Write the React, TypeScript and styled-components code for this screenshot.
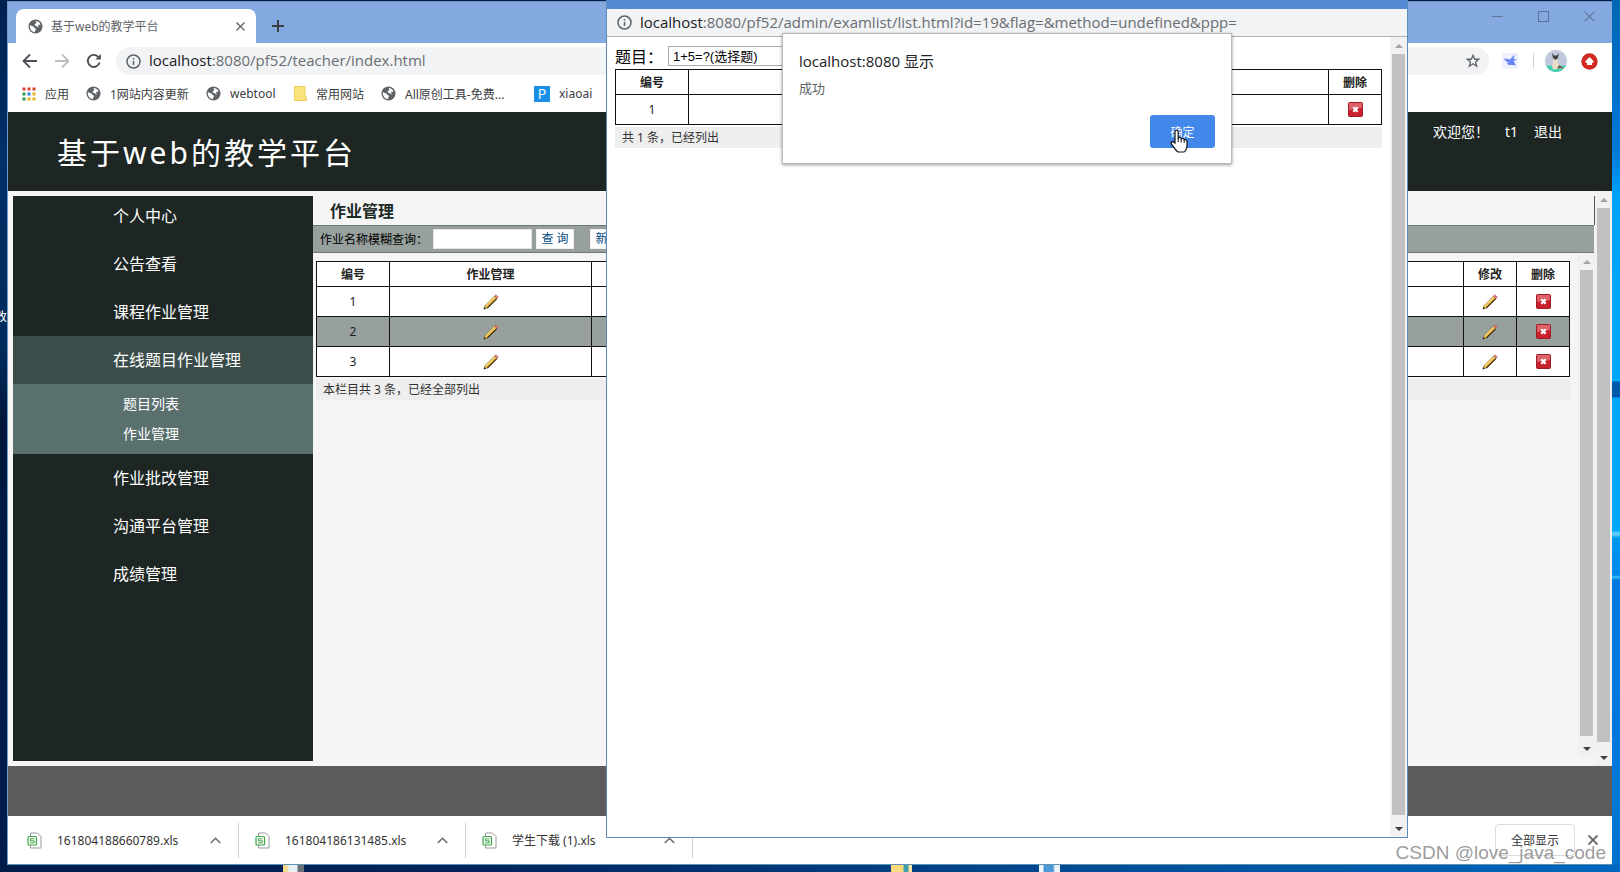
import React from "react";
import styled, { createGlobalStyle, css } from "styled-components";

const UI = `"Open Sans", "Noto Sans CJK SC", sans-serif`;
const CN = `"Noto Sans", "Noto Sans CJK SC", sans-serif`;

const GlobalStyle = createGlobalStyle`
  * { box-sizing: border-box; }
  body { margin: 0; font-family: ${CN}; font-size: 12px; color: #222; }
  button, input, select { font-family: inherit; }
  ul { list-style: none; margin: 0; padding: 0; }
  h1, h2, p { margin: 0; font-weight: 400; }
`;

const Desktop = styled.div`
  position: relative;
  display: flex;
  flex-direction: column;
  min-height: 100vh;
  padding: 1px 8px 0 7px;
  background:
    linear-gradient(90deg, #021d4a 0, #03245c 30%, #0354a0 75%, #0067bd 100%) bottom / 100% 7px no-repeat,
    linear-gradient(180deg, #0167b5 0, #0078d8 150px, #00a2f8 195px, #00a8fc 300px, #00a8fc 381px, #0058a8 382px, #0058a8 397px, #00a8fc 398px, #00a8fc 530px, #70d4ff 534px, #0098f0 538px, #0088e8 575px, #36c4f8 577px, #0078e0 580px, #0078d8 800px, #0070c8 100%) right / 8px 100% no-repeat,
    linear-gradient(180deg, #00204f 0, #003068 150px, #002a5c 350px, #001538 430px, #001a44 520px, #001c4a 100%);
`;
const DesktopLabel = styled.span`
  position: absolute;
  left: -5px;
  top: 308px;
  width: 12px;
  overflow: hidden;
  font-size: 12px;
  line-height: 18px;
  color: #fff;
`;
const TaskStrip = styled.div`
  display: flex;
  height: 7px;
  padding-left: 276px;
  overflow: hidden;
`;
const TaskIcon = styled.i<{ $bg: string; $gap?: number }>`
  width: 21px;
  margin-right: ${(p) => p.$gap ?? 0}px;
  background: ${(p) => p.$bg};
`;

const Browser = styled.div`
  flex: 1;
  display: flex;
  flex-direction: column;
  border-left: 1px solid #6d9ccb;
  border-bottom: 1px solid #5c93b5;
  background: #fff;
`;
const TabStrip = styled.div`
  display: flex;
  align-items: flex-end;
  height: 42px;
  padding-left: 8px;
  background: #84a9e0;
  border-top: 1px solid #6d8fc0;
`;
const Tab = styled.div`
  display: flex;
  align-items: center;
  gap: 8px;
  width: 240px;
  height: 34px;
  padding: 0 8px 0 12px;
  border-radius: 8px 8px 0 0;
  background: #fff;
  font-size: 12px;
  color: #5f6368;
  span { flex: 1; }
`;
const IconButton = styled.button<{ $w?: number }>`
  display: flex;
  align-items: center;
  justify-content: center;
  width: ${(p) => p.$w ?? 16}px;
  height: 28px;
  padding: 0;
  border: 0;
  background: none;
`;
const NewTab = styled(IconButton)`
  margin: 0 0 3px 14px;
`;
const WindowControls = styled.div`
  display: flex;
  align-self: flex-start;
  margin-left: auto;
`;
const Toolbar = styled.div`
  display: flex;
  align-items: center;
  height: 36px;
  padding: 0 12px 0 14px;
`;
const NavGroup = styled.div`
  display: flex;
  gap: 16px;
`;
const Omnibox = styled.div`
  flex: 1;
  display: flex;
  align-items: center;
  gap: 8px;
  height: 28px;
  margin-left: 14px;
  padding: 0 8px 0 10px;
  border-radius: 14px;
  background: #f1f3f4;
`;
const Address = styled.span`
  flex: 1;
  padding-bottom: 2px;
  font-family: ${UI};
  font-size: 15px;
  line-height: 20px;
  color: #6a6e73;
  b { font-weight: 400; color: #202124; }
`;
const Extensions = styled.div`
  display: flex;
  align-items: center;
  gap: 11px;
  margin-left: 13px;
`;
const Divider = styled.i`
  width: 1px;
  height: 16px;
  margin: 0 0 0 4px;
  background: #d0d0d0;
`;
const Bookmarks = styled.nav`
  display: flex;
  align-items: center;
  height: 33px;
  padding: 0 0 4px 14px;
`;
const Bookmark = styled.a<{ $w: number }>`
  display: flex;
  align-items: center;
  gap: 9px;
  width: ${(p) => p.$w}px;
  font-size: 12px;
  white-space: nowrap;
  color: #3c4043;
  text-decoration: none;
`;

const Header = styled.header`
  display: flex;
  justify-content: space-between;
  height: 79px;
  padding: 0 50px 0 49px;
  background: #1d2623;
  color: #fff;
`;
const SiteTitle = styled.h1`
  align-self: center;
  padding-top: 2px;
  font-size: 30px;
  line-height: 40px;
  letter-spacing: 3px;
`;
const UserBar = styled.div`
  display: flex;
  gap: 16px;
  padding-top: 10px;
  font-size: 14px;
  line-height: 20px;
  a { color: #fff; text-decoration: none; }
`;
const Body = styled.div`
  flex: 1;
  display: flex;
  padding-left: 5px;
  background: #f5f5f5;
`;
const Sidebar = styled.nav`
  width: 300px;
  margin: 5px 0;
  background: #1d2623;
`;
const MenuLink = styled.a<{ $active?: boolean }>`
  display: block;
  height: 40px;
  margin-bottom: 8px;
  padding-left: 100px;
  font-size: 16px;
  line-height: 40px;
  color: #fff;
  text-decoration: none;
  ${(p) =>
    p.$active &&
    css`
      height: 48px;
      margin: -4px 0 0;
      line-height: 48px;
      background: #3b4d4a;
    `}
`;
const SubMenu = styled.ul`
  margin-bottom: 4px;
  padding: 5px 0 5px 110px;
  background: #5a706e;
  a {
    display: block;
    font-size: 14px;
    line-height: 30px;
    color: #fff;
    text-decoration: none;
  }
`;
const Main = styled.main`
  flex: 1;
  display: flex;
  flex-direction: column;
  margin: 5px 0 9px;
`;
const PageTitle = styled.h2`
  height: 29px;
  padding-left: 17px;
  border-right: 1px solid #4f5c59;
  font-size: 16px;
  font-weight: 700;
  line-height: 30px;
  color: #1c2a26;
`;
const SearchBar = styled.form`
  display: flex;
  align-items: center;
  height: 28px;
  margin-right: 1px;
  padding-left: 7px;
  border-top: 1px solid #6c7876;
  border-bottom: 1px solid #6c7876;
  background: #98a09e;
  color: #000;
  label { width: 113px; }
`;
const SearchInput = styled.input`
  width: 99px;
  height: 20px;
  border: 1px solid #e4e4e4;
  background: #fff;
`;
const FormButton = styled.button<{ $gap: number }>`
  width: 38px;
  height: 20px;
  margin-left: ${(p) => p.$gap}px;
  padding: 0;
  border: 1px solid #eee;
  background: #fff;
  font-size: 12px;
  line-height: 16px;
  color: #064a80;
`;
const Pane = styled.div`
  flex: 1;
  display: flex;
`;
const ListArea = styled.div`
  flex: 1;
  padding: 8px 8px 0 3px;
`;
const DataTable = styled.table`
  width: 100%;
  border-collapse: collapse;
  table-layout: fixed;
  background: #fff;
  text-align: center;
  th, td { padding: 0; border: 1px solid #111; }
  th { height: 25px; font-weight: 700; }
  td { height: 30px; }
  svg { display: block; }
`;
const Row = styled.tr<{ $shade?: boolean }>`
  background: ${(p) => (p.$shade ? "#98a09e" : "#fff")};
`;
const CellButton = styled.button`
  display: block;
  margin: 0 auto;
  padding: 0;
  border: 0;
  background: none;
`;
const ListNote = styled.p`
  margin-top: 2px;
  padding: 0 7px;
  background: #eee;
  line-height: 21px;
  color: #333;
`;
const Track = styled.div`
  display: flex;
  flex-direction: column;
  align-items: center;
  width: 17px;
  background: #f1f1f1;
`;
const Arrow = styled.i<{ $down?: boolean }>`
  height: 17px;
  display: flex;
  align-items: center;
  &::before {
    content: "";
    border: 4px solid transparent;
    border-top-width: ${(p) => (p.$down ? 4 : 0)}px;
    border-bottom-width: ${(p) => (p.$down ? 0 : 4)}px;
    border-top-color: ${(p) => (p.$down ? "#404040" : "transparent")};
    border-bottom-color: ${(p) => (p.$down ? "transparent" : "#a3a3a3")};
  }
`;
const Thumb = styled.i<{ $end?: number }>`
  flex: 1;
  width: 13px;
  margin-bottom: ${(p) => p.$end ?? 0}px;
  background: #c1c1c1;
`;
const Footer = styled.footer`
  height: 50px;
  background: #5c5c5c;
`;
const Downloads = styled.div`
  display: flex;
  align-items: center;
  height: 48px;
  padding: 0 11px 0 19px;
`;
const Download = styled.div`
  display: flex;
  align-items: center;
  gap: 15px;
  width: 227px;
  height: 35px;
  padding-right: 14px;
  border-right: 1px solid #cfcfcf;
  & + & { padding-left: 16px; }
  span { flex: 1; color: #333; }
`;
const DownloadFirst = styled(Download)`
  width: 212px;
`;
const ShowAll = styled.button`
  width: 80px;
  height: 32px;
  margin: 0 10px 0 auto;
  border: 1px solid #dadce0;
  border-radius: 4px;
  background: #fff;
  font-size: 12px;
  color: #333;
`;
const Watermark = styled.span`
  position: absolute;
  right: 14px;
  bottom: 7px;
  font-family: "Liberation Sans", sans-serif;
  font-size: 19px;
  line-height: 24px;
  color: rgba(90, 90, 90, 0.62);
`;

const Popup = styled.section`
  position: absolute;
  left: 606px;
  right: 212px;
  top: 0;
  bottom: 34px;
  display: flex;
  flex-direction: column;
  border: 1px solid #5d8cba;
  border-top: 0;
  background: #fff;
`;
const PopupTitle = styled.div`
  height: 9px;
  background: #558ad4;
`;
const PopupAddress = styled.div`
  display: flex;
  align-items: center;
  gap: 8px;
  height: 28px;
  padding-left: 10px;
  background: #f1f3f4;
  border-bottom: 1px solid #b0b2b4;
`;
const PopupBody = styled.div`
  flex: 1;
  display: flex;
`;
const PopupContent = styled.div`
  flex: 1;
  padding: 9px 8px;
`;
const Field = styled.div`
  display: flex;
  height: 23px;
  label {
    width: 53px;
    font-size: 16px;
    line-height: 22px;
    color: #000;
  }
`;
const Select = styled.select`
  width: 180px;
  height: 20px;
  padding: 0 4px;
  border: 1px solid #a9a9a9;
  border-radius: 0;
  appearance: none;
  background: #fff;
  font-family: "Liberation Sans", "Noto Sans CJK SC", sans-serif;
  font-size: 13px;
  color: #000;
`;
const Dialog = styled.div`
  position: absolute;
  left: 175px;
  top: 33px;
  width: 450px;
  height: 131px;
  padding: 16px 16px 15px;
  border: 1px solid #bbb;
  background: #fff;
  box-shadow: 0 1px 3px rgba(0, 0, 0, 0.4);
  display: flex;
  flex-direction: column;
  h2 {
    font-family: ${UI};
    font-size: 15px;
    line-height: 22px;
    color: #202124;
  }
  p {
    padding-top: 6px;
    font-size: 13px;
    line-height: 20px;
    color: #5f6368;
  }
`;
const Confirm = styled.button`
  align-self: flex-end;
  width: 65px;
  height: 33px;
  margin-top: auto;
  border: 0;
  border-radius: 3px;
  background: #4287ea;
  font-size: 12px;
  color: #fff;
`;
const Pointer = styled.svg`
  position: absolute;
  left: 387px;
  top: 95px;
`;

const Globe = () => (
  <svg width="15" height="15" viewBox="0 0 16 16">
    <circle cx="8" cy="8" r="7.5" fill="#5f6368" />
    <path d="M2 6.5 C4 8 6 7.5 6.5 9 C7 10 8.5 9.5 8.5 11 L7 14 C4 13.5 2 11 2 8Z M8 2.2 C10 2 12.5 3.5 13.5 6 L11 6.2 C10 7.5 12 8 11 9.2 L9.5 7.8 C8 7 6.8 7 7.2 5.5 C8 4.8 9 5 8.8 3.8Z" fill="#fff" />
  </svg>
);
const Info = () => (
  <svg width="15" height="15" viewBox="0 0 15 15" fill="none" stroke="#5f6368" strokeWidth="1.5">
    <circle cx="7.5" cy="7.5" r="6.5" />
    <path d="M7.5 6.8V11M7.5 4V5.5" />
  </svg>
);
const Cross = ({ size = 9, color = "#5f6368", w = 1.4 }: { size?: number; color?: string; w?: number }) => (
  <svg width={size} height={size} viewBox="0 0 10 10" stroke={color} strokeWidth={w}>
    <path d="M.5 .5L9.5 9.5M9.5 .5L.5 9.5" />
  </svg>
);
const Back = ({ color = "#4d5156", flip = false }: { color?: string; flip?: boolean }) => (
  <svg width="16" height="16" viewBox="0 0 16 16" fill="none" stroke={color} strokeWidth="1.8">
    <path d={flip ? "M1 8H14M8 1.5L14.5 8L8 14.5" : "M15 8H2M8 1.5L1.5 8L8 14.5"} />
  </svg>
);
const Reload = () => (
  <svg width="16" height="16" viewBox="0 0 16 16" fill="none" stroke="#4d5156" strokeWidth="1.9">
    <path d="M13.6 9.5A6 6 0 1 1 12.2 3.8L14 5.6" />
    <path d="M14.9 1V6.6H9.3Z" fill="#4d5156" stroke="none" />
  </svg>
);
const Star = () => (
  <svg width="14" height="14" viewBox="0 0 16 16" fill="none" stroke="#5f6368" strokeWidth="1.5">
    <path d="M8 1.5L9.9 6H14.6L10.9 9.1L12.2 14L8 11.2L3.8 14L5.1 9.1L1.4 6H6.1Z" />
  </svg>
);
const Bird = () => (
  <svg width="16" height="16" viewBox="0 0 16 16">
    <rect width="16" height="16" fill="#eef0ff" />
    <path d="M2 5.500L8 6.500L12.500 1.500L11.500 6L15 6.200L11.500 8L14 12.500L9.500 11.800C7 12.500 5.500 11.500 5 10L7 9.500C4.500 9 3 7.500 2 5.500Z" fill="#6183f4" />
  </svg>
);
const Avatar = () => (
  <svg width="22" height="22" viewBox="0 0 22 22">
    <circle cx="11" cy="11" r="11" fill="#c3c9dc" />
    <path d="M1 15.500H21A11 11 0 0 1 1 15.500Z" fill="#43d0b0" />
    <path d="M9 8H12L13 14L19 18L8 19.500L7 16Z" fill="#e9dfc4" />
    <path d="M7 3L9 5.500H12L14 3L13 8L10.500 10L8 8Z" fill="#3d4440" />
    <path d="M14 15L19 18L12 18.500Z" fill="#6a5b4d" />
  </svg>
);
const UpdateBadge = () => (
  <svg width="17" height="17" viewBox="0 0 17 17">
    <circle cx="8.500" cy="8.500" r="8.200" fill="#d02b23" />
    <path d="M8.500 4L13 8.500L11.500 10H11V12H6V10H5.500L4 8.500Z" fill="#fff" />
  </svg>
);
const AppsGrid = () => (
  <svg width="14" height="14" viewBox="0 0 14 14">
    {["#d8402f", "#d8402f", "#d8402f", "#2d9a4c", "#3b7de0", "#e9b11e", "#2d9a4c", "#e9b11e", "#e9b11e"].map((c, i) => (
      <rect key={i} x={(i % 3) * 5 + 0.5} y={Math.floor(i / 3) * 5 + 0.5} width="3" height="3" fill={c} />
    ))}
  </svg>
);
const Folder = () => (
  <svg width="13" height="15" viewBox="0 0 13 15">
    <path d="M.5 .5H11V11H12.500V14.500H.5Z" fill="#fae27c" stroke="#efcf5c" />
  </svg>
);
const PBadge = styled.i`
  width: 16px;
  height: 16px;
  background: #1a8fe8;
  color: #fff;
  font: 14px/16px ${UI};
  text-align: center;
`;
const Pencil = () => (
  <svg width="16" height="16" viewBox="0 0 16 16">
    <path d="M1 15L2.200 11.500L11.500 2L14 4.500L4.500 13.800Z" fill="#f0c04a" stroke="#6f5420" strokeWidth=".6" />
    <path d="M4.300 14L13.800 4.600" stroke="#3a2a10" strokeWidth="1.100" />
    <path d="M3 11.500L11.800 2.800" stroke="#fbe69a" strokeWidth=".9" />
    <path d="M11.500 2L13 .7L15.300 3L14 4.500Z" fill="#df7c74" stroke="#a8605a" strokeWidth=".6" />
    <path d="M.6 15.400L1.400 13L3 14.600Z" fill="#222" />
  </svg>
);
const Remove = () => (
  <svg width="15" height="15" viewBox="0 0 15 15">
    <rect x=".5" y=".5" width="14" height="14" rx="1" fill="#c8202c" stroke="#9c1b24" />
    <path d="M1 1H14V6L1 8Z" fill="#df6269" />
    <path d="M5.300 5.300L9.700 9.700M9.700 5.300L5.300 9.700" stroke="#fff" strokeWidth="2.200" />
  </svg>
);
const SheetIcon = () => (
  <svg width="15" height="17" viewBox="0 0 15 17" fill="none">
    <path d="M3.500 4V1H10.500L14 4.500V16H3.500V13" stroke="#9a9a9a" />
    <rect x="1" y="4.500" width="8.500" height="8.500" rx="1" stroke="#3fa648" strokeWidth="1.200" fill="#fff" />
    <path d="M7.500 6.800H3.300V8.800H7.200V10.900H3" stroke="#3fa648" />
  </svg>
);
const Chevron = () => (
  <svg width="11" height="7" viewBox="0 0 11 7" fill="none" stroke="#6a6a6a" strokeWidth="1.500">
    <path d="M.8 6L5.500 1.300L10.200 6" />
  </svg>
);

const Scrollbar = ({ end }: { end?: number }) => (
  <Track>
    <Arrow />
    <Thumb $end={end} />
    <Arrow $down />
  </Track>
);

const topMenu = ["个人中心", "公告查看", "课程作业管理"];
const bottomMenu = ["作业批改管理", "沟通平台管理", "成绩管理"];

export default function App() {
  return (
    <>
      <GlobalStyle />
      <Desktop>
        <DesktopLabel>改</DesktopLabel>
        <Browser>
          <TabStrip>
            <Tab>
              <Globe />
              <span>基于web的教学平台</span>
              <IconButton aria-label="关闭标签页"><Cross /></IconButton>
            </Tab>
            <NewTab aria-label="新标签页">
              <svg width="12" height="12" viewBox="0 0 12 12" stroke="#3c4043" strokeWidth="2"><path d="M6 0V12M0 6H12" /></svg>
            </NewTab>
            <WindowControls>
              <IconButton $w={46} aria-label="最小化">
                <svg width="11" height="11" stroke="#5d7398"><path d="M0 5.500H11" /></svg>
              </IconButton>
              <IconButton $w={46} aria-label="最大化">
                <svg width="11" height="11" fill="none" stroke="#5d7398"><rect x=".5" y=".5" width="10" height="10" /></svg>
              </IconButton>
              <IconButton $w={46} aria-label="关闭"><Cross size={11} color="#5d7398" w={1} /></IconButton>
            </WindowControls>
          </TabStrip>
          <Toolbar>
            <NavGroup>
              <IconButton aria-label="后退"><Back /></IconButton>
              <IconButton aria-label="前进"><Back flip color="#bcbec0" /></IconButton>
              <IconButton aria-label="重新加载"><Reload /></IconButton>
            </NavGroup>
            <Omnibox>
              <Info />
              <Address><b>localhost</b>:8080/pf52/teacher/index.html</Address>
              <IconButton aria-label="收藏"><Star /></IconButton>
            </Omnibox>
            <Extensions>
              <Bird />
              <Divider />
              <Avatar />
              <IconButton $w={22} aria-label="更新"><UpdateBadge /></IconButton>
            </Extensions>
          </Toolbar>
          <Bookmarks>
            <Bookmark href="#" $w={64}><AppsGrid />应用</Bookmark>
            <Bookmark href="#" $w={120}><Globe />1网站内容更新</Bookmark>
            <Bookmark href="#" $w={88}><Globe />webtool</Bookmark>
            <Bookmark href="#" $w={87}><Folder />常用网站</Bookmark>
            <Bookmark href="#" $w={153}><Globe />All原创工具-免费...</Bookmark>
            <Bookmark href="#" $w={60}><PBadge>P</PBadge>xiaoai</Bookmark>
          </Bookmarks>
          <Header>
            <SiteTitle>基于web的教学平台</SiteTitle>
            <UserBar>
              <span>欢迎您！</span>
              <span>t1</span>
              <a href="#">退出</a>
            </UserBar>
          </Header>
          <Body>
            <Sidebar>
              {topMenu.map((t) => <MenuLink href="#" key={t}>{t}</MenuLink>)}
              <MenuLink href="#" $active>在线题目作业管理</MenuLink>
              <SubMenu>
                <li><a href="#">题目列表</a></li>
                <li><a href="#">作业管理</a></li>
              </SubMenu>
              {bottomMenu.map((t) => <MenuLink href="#" key={t}>{t}</MenuLink>)}
            </Sidebar>
            <Main>
              <PageTitle>作业管理</PageTitle>
              <SearchBar>
                <label htmlFor="keyword">作业名称模糊查询：</label>
                <SearchInput id="keyword" />
                <FormButton type="button" $gap={4}>查 询</FormButton>
                <FormButton type="button" $gap={16}>新 增</FormButton>
              </SearchBar>
              <Pane>
                <ListArea>
                  <DataTable>
                    <colgroup>
                      <col style={{ width: 73 }} />
                      <col style={{ width: 202 }} />
                      <col />
                      <col style={{ width: 53 }} />
                      <col style={{ width: 53 }} />
                    </colgroup>
                    <thead>
                      <tr><th>编号</th><th>作业管理</th><th /><th>修改</th><th>删除</th></tr>
                    </thead>
                    <tbody>
                      {[1, 2, 3].map((n) => (
                        <Row key={n} $shade={n === 2}>
                          <td>{n}</td>
                          <td><CellButton aria-label="管理"><Pencil /></CellButton></td>
                          <td />
                          <td><CellButton aria-label="修改"><Pencil /></CellButton></td>
                          <td><CellButton aria-label="删除"><Remove /></CellButton></td>
                        </Row>
                      ))}
                    </tbody>
                  </DataTable>
                  <ListNote>本栏目共 3 条，已经全部列出</ListNote>
                </ListArea>
                <Scrollbar end={4} />
              </Pane>
            </Main>
            <Scrollbar end={7} />
          </Body>
          <Footer />
          <Downloads>
            <DownloadFirst><SheetIcon /><span>161804188660789.xls</span><IconButton $w={18} aria-label="更多"><Chevron /></IconButton></DownloadFirst>
            <Download><SheetIcon /><span>161804186131485.xls</span><IconButton $w={18} aria-label="更多"><Chevron /></IconButton></Download>
            <Download><SheetIcon /><span>学生下载 (1).xls</span><IconButton $w={18} aria-label="更多"><Chevron /></IconButton></Download>
            <ShowAll>全部显示</ShowAll>
            <IconButton aria-label="关闭下载栏"><Cross size={10} w={1.8} /></IconButton>
          </Downloads>
        </Browser>
        <TaskStrip>
          <TaskIcon $gap={587} $bg="linear-gradient(90deg, #f3dc8c 4px, #e8f0f4 6px 14px, #6a7078 15px)" />
          <TaskIcon $gap={127} $bg="linear-gradient(90deg, #fbd97a 12px, #3b9fae 13px 17px, #fbe3a0 18px)" />
          <TaskIcon $bg="linear-gradient(90deg, #eaf4fb 4px, #4c98d6 5px 14px, #eaf4fb 16px)" />
        </TaskStrip>

        <Popup>
          <PopupTitle />
          <PopupAddress>
            <Info />
            <Address><b>localhost</b>:8080/pf52/admin/examlist/list.html?id=19&amp;flag=&amp;method=undefined&amp;ppp=</Address>
          </PopupAddress>
          <PopupBody>
            <PopupContent>
              <Field>
                <label htmlFor="question">题目：</label>
                <Select id="question"><option>1+5=?(选择题)</option></Select>
              </Field>
              <DataTable>
                <colgroup>
                  <col style={{ width: 73 }} />
                  <col />
                  <col style={{ width: 53 }} />
                </colgroup>
                <thead>
                  <tr><th>编号</th><th /><th>删除</th></tr>
                </thead>
                <tbody>
                  <Row>
                    <td>1</td>
                    <td />
                    <td><CellButton aria-label="删除"><Remove /></CellButton></td>
                  </Row>
                </tbody>
              </DataTable>
              <ListNote>共 1 条，已经列出</ListNote>
            </PopupContent>
            <Scrollbar end={5} />
          </PopupBody>
          <Dialog role="alertdialog" aria-labelledby="dialog-title">
            <h2 id="dialog-title">localhost:8080 显示</h2>
            <p>成功</p>
            <Confirm>确定</Confirm>
            <Pointer width="18" height="24" viewBox="0 0 18 24">
              <path d="M5 14V3C5 .5 8.200 .5 8.200 3V9C9 8 11 8.200 11.200 9.800C12 8.800 14 9.200 14.200 10.800C15.200 10.200 17 10.800 17 12.500V17C17 20 15 22.800 14 23H8C6 21.500 3.500 18 1.300 14.800C.5 13 2.500 12 3.600 13.200Z" fill="#fff" stroke="#111" strokeWidth="1.200" />
              <path d="M8.200 9V13M11.200 10V13.500M14.200 11V14" stroke="#111" />
            </Pointer>
          </Dialog>
        </Popup>
        <Watermark>CSDN @love_java_code</Watermark>
      </Desktop>
    </>
  );
}
